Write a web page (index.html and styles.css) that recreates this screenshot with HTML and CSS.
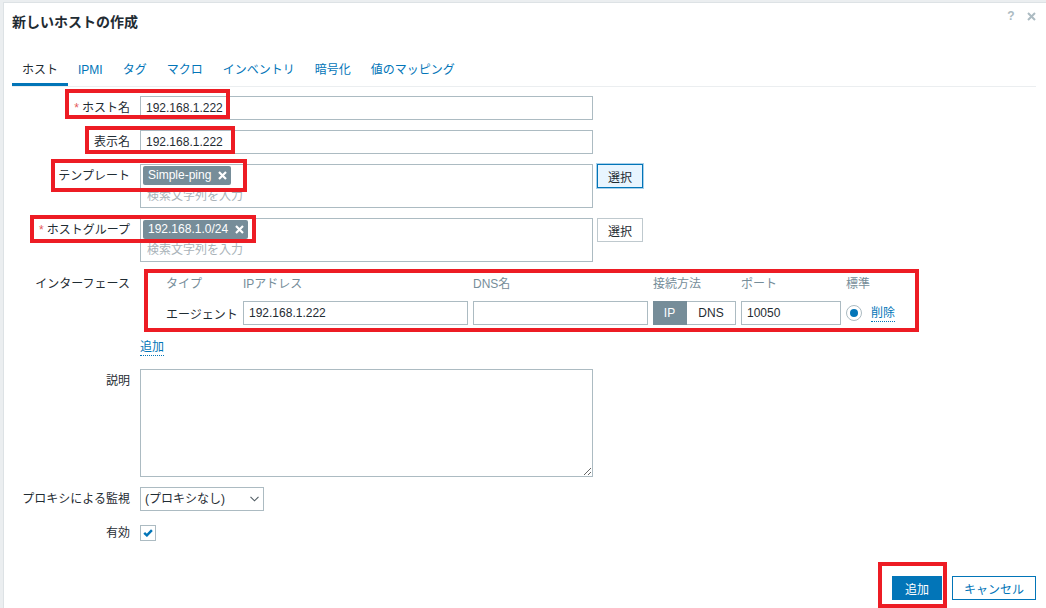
FILE: index.html
```html
<!DOCTYPE html>
<html lang="ja">
<head>
    <meta charset="UTF-8">
    <meta name="viewport" content="width=device-width, initial-scale=1.0">
    <title>新しいホストの作成</title>
    <link rel="stylesheet" href="styles.css">
</head>
<body>

<div class="dialog">
    <div class="dialog-header">
        <h4>新しいホストの作成</h4>
        <div class="header-btns">
            <button class="btn-icon" type="button">?</button>
            <button class="btn-icon" type="button">
                <svg width="9" height="9" viewBox="0 0 9 9"><path d="M1 1L8 8M8 1L1 8" stroke="#acbbc2" stroke-width="2"/></svg>
            </button>
        </div>
    </div>

    <ul class="tabs">
        <li class="active"><a href="#">ホスト</a></li>
        <li><a href="#">IPMI</a></li>
        <li><a href="#">タグ</a></li>
        <li><a href="#">マクロ</a></li>
        <li><a href="#">インベントリ</a></li>
        <li><a href="#">暗号化</a></li>
        <li><a href="#">値のマッピング</a></li>
    </ul>

    <form class="form-grid">
        <label class="required">ホスト名</label>
        <div class="field"><input class="text" type="text" value="192.168.1.222"></div>

        <label>表示名</label>
        <div class="field"><input class="text" type="text" value="192.168.1.222"></div>

        <label>テンプレート</label>
        <div class="field">
            <div class="multiselect">
                <div class="chips">
                    <span class="chip">Simple-ping
                        <svg width="9" height="9" viewBox="0 0 9 9"><path d="M1 1L8 8M8 1L1 8" stroke="#fff" stroke-width="2.2"/></svg>
                    </span>
                </div>
                <input class="ms-input" type="text" placeholder="検索文字列を入力">
            </div>
            <button class="btn-select focused" type="button">選択</button>
        </div>

        <label class="required">ホストグループ</label>
        <div class="field">
            <div class="multiselect">
                <div class="chips">
                    <span class="chip">192.168.1.0/24
                        <svg width="9" height="9" viewBox="0 0 9 9"><path d="M1 1L8 8M8 1L1 8" stroke="#fff" stroke-width="2.2"/></svg>
                    </span>
                </div>
                <input class="ms-input" type="text" placeholder="検索文字列を入力">
            </div>
            <button class="btn-select" type="button">選択</button>
        </div>

        <label>インターフェース</label>
        <div class="iface">
            <div class="iface-grid">
                <div class="th">タイプ</div>
                <div class="th">IPアドレス</div>
                <div class="th">DNS名</div>
                <div class="th">接続方法</div>
                <div class="th">ポート</div>
                <div class="th">標準</div>
                <div class="th"></div>

                <div class="nowrap">エージェント</div>
                <input class="text full" type="text" value="192.168.1.222">
                <input class="text full" type="text" value="">
                <div class="toggle">
                    <span class="on">IP</span>
                    <span>DNS</span>
                </div>
                <input class="text full" type="text" value="10050">
                <span class="radio"><span class="dot"></span></span>
                <a class="link remove" href="#">削除</a>
            </div>
            <div class="iface-add"><a class="link" href="#">追加</a></div>
        </div>

        <label>説明</label>
        <div class="field"><textarea class="desc"></textarea></div>

        <label>プロキシによる監視</label>
        <div class="field">
            <div class="select-wrap">
                <select class="select">
                    <option>(プロキシなし)</option>
                </select>
                <svg class="chevron" width="9" height="6" viewBox="0 0 9 6"><path d="M0.5 0.8L4.5 4.8L8.5 0.8" fill="none" stroke="#4f5b62" stroke-width="1.1"/></svg>
            </div>
        </div>

        <label>有効</label>
        <div class="field">
            <span class="checkbox">
                <svg width="10" height="8" viewBox="0 0 10 8"><path d="M1.2 3.8L3.9 6.4L8.9 1.2" fill="none" stroke="#0275b8" stroke-width="2.4"/></svg>
            </span>
        </div>
    </form>

    <div class="dialog-footer">
        <button class="btn-primary" type="button">追加</button>
        <button class="btn-outline" type="button">キャンセル</button>
    </div>
</div>

<!-- 注釈の赤枠 -->
<div class="mark mark-host"></div>
<div class="mark mark-visible"></div>
<div class="mark mark-template"></div>
<div class="mark mark-group"></div>
<div class="mark mark-iface"></div>
<div class="mark mark-add"></div>

</body>
</html>
```

FILE: styles.css
```css
* {
    box-sizing: border-box;
}

html, body {
    margin: 0;
    height: 100%;
}

body {
    background-color: #ebeef0;
    padding: 2px 0 0 3px;
    font-family: "Liberation Sans", Arial, "Noto Sans CJK JP", sans-serif;
    font-size: 12px;
    color: #1f2c33;
    overflow: hidden;
}

.dialog {
    background-color: #fff;
    border-left: 1px solid #dde2e5;
    border-top: 1px solid #dde2e5;
    height: 100%;
}

.dialog-header {
    display: flex;
    justify-content: space-between;
    padding: 10px 8px 0 8px;
}

.dialog-header h4 {
    margin: 0;
    font-size: 14px;
    line-height: 18px;
    font-weight: bold;
    color: #1f2c33;
}

.header-btns {
    display: flex;
    gap: 6px;
    margin-top: -4px;
}

.btn-icon {
    width: 14px;
    height: 14px;
    padding: 0;
    border: 0;
    background: none;
    color: #acbbc2;
    font-family: "Liberation Sans", Arial, sans-serif;
    font-size: 12px;
    font-weight: bold;
    display: flex;
    align-items: center;
    justify-content: center;
}

/* タブ */
.tabs {
    display: flex;
    list-style: none;
    margin: 24px 10px 0 8px;
    padding: 0;
    border-bottom: 1px solid #ebeef0;
}

.tabs a {
    display: block;
    padding: 7px 10px 5px;
    line-height: 16px;
    color: #0275b8;
    text-decoration: none;
    border-bottom: 3px solid transparent;
}

.tabs .active a {
    color: #1f2c33;
    border-bottom-color: #0275b8;
}

/* フォーム */
.form-grid {
    display: grid;
    grid-template-columns: 126px 1fr;
    column-gap: 10px;
    row-gap: 10px;
    margin: 0;
    padding-top: 9px;
}

.form-grid > label {
    text-align: right;
    line-height: 24px;
    white-space: nowrap;
}

.required::before {
    content: "*";
    color: #e45959;
    margin-right: 3px;
}

.field {
    display: flex;
    align-items: flex-start;
}

.text {
    width: 453px;
    height: 24px;
    border: 1px solid #acbbc2;
    padding: 0 5px;
    font: inherit;
    color: #1f2c33;
    background-color: #fff;
}

.text.full {
    width: 100%;
}

.multiselect {
    width: 453px;
    height: 44px;
    border: 1px solid #acbbc2;
    padding: 1px 0 0 2px;
}

.chips {
    display: flex;
}

.chip {
    display: inline-flex;
    align-items: center;
    gap: 7px;
    line-height: 19px;
    padding: 0 4px 0 5px;
    background-color: #768d99;
    color: #fff;
    border-radius: 2px;
}

.ms-input {
    display: block;
    width: 100%;
    height: 20px;
    margin-top: 1px;
    border: 0;
    outline: 0;
    padding: 0 4px;
    font: inherit;
}

.ms-input::placeholder {
    color: #a9b3b9;
}

.btn-select {
    width: 46px;
    height: 24px;
    margin-left: 4px;
    border: 1px solid #bfc9ce;
    background-color: #fff;
    color: #1f2c33;
    font: inherit;
    padding: 0;
}

.btn-select.focused {
    background-color: #e8f5ff;
    border-color: #0275b8;
    box-shadow: 0 0 0 1px #a9d0ea;
}

/* インターフェース */
.iface-grid {
    display: grid;
    grid-template-columns: 72px 225px 175px 83px 100px 16px auto;
    column-gap: 5px;
    row-gap: 5px;
    align-items: center;
    padding-left: 26px;
}

.iface-grid .th {
    color: #768d99;
    line-height: 24px;
    white-space: nowrap;
}

.nowrap {
    white-space: nowrap;
}

.toggle {
    display: flex;
    height: 24px;
}

.toggle span {
    display: flex;
    align-items: center;
    justify-content: center;
    width: 49px;
    border: 1px solid #acbbc2;
    border-left: 0;
}

.toggle span.on {
    width: 34px;
    background-color: #768d99;
    border-color: #768d99;
    color: #fff;
}

.radio {
    width: 16px;
    height: 16px;
    border: 1px solid #acbbc2;
    border-radius: 50%;
    display: flex;
    align-items: center;
    justify-content: center;
}

.radio .dot {
    width: 8px;
    height: 8px;
    border-radius: 50%;
    background-color: #0275b8;
}

.link {
    color: #0275b8;
    text-decoration: none;
    border-bottom: 1px dotted #0275b8;
}

.remove {
    justify-self: start;
    margin-left: 4px;
    line-height: 16px;
    white-space: nowrap;
}

.iface-add {
    margin-top: 10px;
    height: 24px;
}

.iface-add .link {
    display: inline-block;
    line-height: 16px;
    margin-top: 4px;
}

.desc {
    width: 453px;
    height: 108px;
    border: 1px solid #acbbc2;
    font: inherit;
    padding: 4px 5px;
}

.select-wrap {
    position: relative;
    display: inline-block;
}

.select {
    appearance: none;
    -webkit-appearance: none;
    width: 124px;
    height: 24px;
    border: 1px solid #acbbc2;
    border-radius: 0;
    background-color: #fff;
    padding: 0 20px 0 4px;
    font: inherit;
    color: #1f2c33;
}

.chevron {
    position: absolute;
    right: 5px;
    top: 9px;
}

.checkbox {
    width: 16px;
    height: 16px;
    margin-top: 4px;
    border: 1px solid #acbbc2;
    display: flex;
    align-items: center;
    justify-content: center;
}

/* フッター */
.dialog-footer {
    display: flex;
    justify-content: flex-end;
    gap: 10px;
    padding: 31px 10px 0;
}

.btn-primary,
.btn-outline {
    height: 24px;
    font: inherit;
    padding: 0 11px;
    border: 1px solid #0275b8;
}

.btn-primary {
    background-color: #0275b8;
    color: #fff;
    padding: 0 12px;
}

.btn-outline {
    background-color: #fff;
    color: #0275b8;
}

/* 赤枠 */
.mark {
    position: absolute;
    border: 4px solid #ed1c24;
}

.mark-host     { left: 65px;  top: 89px;  width: 165px; height: 30px; }
.mark-visible  { left: 85px;  top: 126px; width: 150px; height: 28px; }
.mark-template { left: 51px;  top: 159px; width: 196px; height: 33px; }
.mark-group    { left: 30px;  top: 215px; width: 226px; height: 28px; }
.mark-iface    { left: 144px; top: 269px; width: 775px; height: 63px; }
.mark-add      { left: 878px; top: 562px; width: 69px;  height: 46px; }
```
